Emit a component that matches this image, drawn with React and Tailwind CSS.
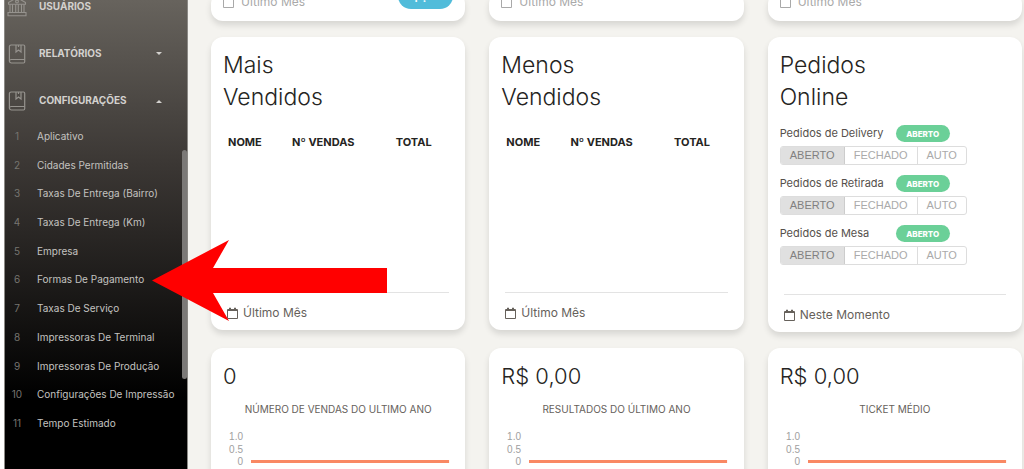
import React from "react";

const submenu = [
  "Aplicativo",
  "Cidades Permitidas",
  "Taxas De Entrega (Bairro)",
  "Taxas De Entrega (Km)",
  "Empresa",
  "Formas De Pagamento",
  "Taxas De Serviço",
  "Impressoras De Terminal",
  "Impressoras De Produção",
  "Configurações De Impressão",
  "Tempo Estimado",
];

function BankIcon() {
  return (
    <svg className="h-5 w-5 shrink-0" viewBox="0 0 20 20" fill="none" stroke="#96938e" strokeWidth="1.1" aria-hidden="true">
      <path d="M1.500 5.500 10 .6l8.500 4.900v1.700h-17z" strokeLinejoin="round" />
      <circle cx="10" cy="4.500" r="1.400" />
      <path d="M3 7.200v8.300M5.500 7.200v8.300M8.700 7.200v8.300M11.300 7.200v8.300M14.500 7.200v8.300M17 7.200v8.300M1 15.500h18v3.200H1z" />
    </svg>
  );
}

function BookIcon() {
  return (
    <svg className="h-5 w-5 shrink-0" viewBox="0 0 20 20" fill="none" stroke="#96938e" strokeWidth="1.2" aria-hidden="true">
      <path d="M4 1h12.500A1.200 1.200 0 0 1 17.700 2.200v15.600a1.200 1.200 0 0 1-1.200 1.200H4.500A2.100 2.100 0 0 1 2.400 16.900V2.600A1.600 1.600 0 0 1 4 1z" />
      <path d="M2.400 17c0-1 .8-1.500 1.800-1.500h13.500M9 1v7l2.500-2L14 8V1M11.500 1v2" />
    </svg>
  );
}

function CalendarIcon() {
  return (
    <svg className="h-3 w-3 shrink-0" viewBox="0 0 12 12" fill="none" stroke="currentColor" aria-hidden="true">
      <path d="M.5 2.500h10v9H.5zM.5 3.500h10" />
      <path d="M3 .8v2M8 .8v2" strokeWidth="2" />
    </svg>
  );
}

function MenuButton({ icon, label, caret }) {
  return (
    <button type="button" className="flex h-[47px] w-full items-center pl-[2px] text-left text-[10px] font-bold text-[#d3d1ce]">
      {icon}
      <span className="ml-3 flex-1">{label}</span>
      {caret && (
        <svg className="mr-6 h-1 w-2" viewBox="0 0 8 4" fill="currentColor" aria-hidden="true">
          <path d={caret === "up" ? "M1 4h6L4 1z" : "M1 0h6L4 3z"} />
        </svg>
      )}
    </button>
  );
}

function Sidebar() {
  return (
    <aside className="relative ml-1 w-[184px] shrink-0 overflow-hidden border-x border-[#8b8985] bg-linear-to-b/srgb from-[#67635d] via-[#3b3734] via-35% to-black to-85%">
      <nav className="-mt-[17px]">
        <MenuButton icon={<BankIcon />} label="USUÁRIOS" />
        <MenuButton icon={<BookIcon />} label="RELATÓRIOS" caret="down" />
        <MenuButton icon={<BookIcon />} label="CONFIGURAÇÕES" caret="up" />
        <ul className="-mt-[2px] grid h-[316px] auto-rows-fr">
          {submenu.map((label, i) => (
            <li key={label} className="flex">
              <a href="#" className="flex flex-1 items-center text-[10px] text-[#c4c3c0]">
                <span className="w-6 text-center text-[#777570]">{i + 1}</span>
                <span className="ml-2 whitespace-nowrap">{label}</span>
              </a>
            </li>
          ))}
        </ul>
      </nav>
      <div className="absolute top-[150px] right-0 h-[229px] w-[5px] rounded-full bg-[#7b7977]" />
    </aside>
  );
}

function Card({ className = "", children }) {
  return <section className={`rounded-xl bg-white px-3 shadow-[0_4px_6px_rgba(0,0,0,0.12)] ${className}`}>{children}</section>;
}

function Footer({ children }) {
  return (
    <div className="mx-1 mt-auto border-t border-[#e3e3e3] pt-[10px]">
      <p className="flex h-5 items-center gap-1 text-[12px] text-[#66615b]">
        <CalendarIcon />
        {children}
      </p>
    </div>
  );
}

function PeriodCard({ action }) {
  return (
    <Card className="pb-[9px]">
      <div className="flex h-5 items-center gap-[6px] text-[12px] text-[#a9a9a9]">
        <CalendarIcon />
        Último Mês
        {action && (
          <button type="button" className="mb-[3px] ml-auto h-[26px] w-[55px] self-end rounded-full bg-[#51bcda] text-[10px] font-bold text-white">
            {action}
          </button>
        )}
      </div>
    </Card>
  );
}

function Title({ children }) {
  return <h2 className="w-min pt-3 text-[23px] leading-8 font-light text-[#252422]">{children}</h2>;
}

function SalesCard({ title }) {
  return (
    <Card className="flex h-[293px] flex-col pb-[7px]">
      <Title>{title}</Title>
      <table className="mt-[13px] w-full table-fixed text-left text-[11px] leading-8 text-[#252422]">
        <thead>
          <tr>
            <th className="w-[30%] pl-[5px] font-bold">NOME</th>
            <th className="w-[45%] font-bold">Nº VENDAS</th>
            <th className="font-bold">TOTAL</th>
          </tr>
        </thead>
      </table>
      <Footer>Último Mês</Footer>
    </Card>
  );
}

function OrderControl({ label }) {
  return (
    <fieldset className="mb-[10px]">
      <div className="flex h-[17px] items-center">
        <legend className="w-[116px] whitespace-nowrap text-[11px] text-[#55504b]">{label}</legend>
        <span className="flex h-[17px] w-[54px] items-center justify-center rounded-full bg-[#6bd098] text-[8px] font-extrabold text-white">ABERTO</span>
      </div>
      <div className="mt-1 flex h-[19px] w-fit overflow-hidden rounded-[3px] border border-[#ddd] font-['Liberation_Sans',sans-serif] text-[11px] text-[#aaa]">
        <button type="button" aria-pressed="true" className="w-16 border-r border-[#ccc] bg-[#e0e0e0] text-[#808080]">ABERTO</button>
        <button type="button" className="w-[73px] border-r border-[#ddd]">FECHADO</button>
        <button type="button" className="w-12">AUTO</button>
      </div>
    </fieldset>
  );
}

function ChartCard({ value, label }) {
  return (
    <Card className="h-[260px]">
      <p className="pt-3 text-[22px] leading-8 font-light text-[#252422]">{value}</p>
      <h3 className="mt-2 text-center text-[10px] leading-[18px] text-[#66615b]">{label}</h3>
      <svg className="mt-3 h-[60px] w-full" aria-hidden="true">
        <g fill="#a0a0a0" textAnchor="end" className="font-['Liberation_Sans',sans-serif] text-[10px]">
          <text x="20" y="10">1.0</text>
          <text x="20" y="23">0.5</text>
          <text x="20" y="35">0</text>
        </g>
        <rect x="28" y="30" width="86%" height="3" fill="#f98863" />
      </svg>
    </Card>
  );
}

export default function App() {
  return (
    <div className="relative flex h-screen overflow-hidden bg-white font-['Inter',sans-serif]">
      <Sidebar />
      <main className="min-w-0 flex-1 overflow-hidden bg-[#f4f3ef] pr-[2px] pl-[23px]">
        <div className="-mt-[8px] grid grid-cols-3 items-start gap-x-6 gap-y-4">
          <PeriodCard action="Opções" />
          <PeriodCard />
          <PeriodCard />
          <SalesCard title="Mais Vendidos" />
          <SalesCard title="Menos Vendidos" />
          <Card className="flex h-[295px] flex-col pb-[7px]">
            <Title>Pedidos Online</Title>
            <div className="mt-3">
              <OrderControl label="Pedidos de Delivery" />
              <OrderControl label="Pedidos de Retirada" />
              <OrderControl label="Pedidos de Mesa" />
            </div>
            <Footer>Neste Momento</Footer>
          </Card>
          <ChartCard value="0" label="NÚMERO DE VENDAS DO ULTIMO ANO" />
          <ChartCard value="R$ 0,00" label="RESULTADOS DO ÚLTIMO ANO" />
          <ChartCard value="R$ 0,00" label="TICKET MÉDIO" />
        </div>
      </main>
      <svg className="pointer-events-none absolute top-[240px] left-[152px] h-[81px] w-[235px]" viewBox="0 0 235 81" fill="red" aria-hidden="true">
        <path d="M0 40.500 77 0 61 28h174v25H61l16 28z" />
      </svg>
    </div>
  );
}
